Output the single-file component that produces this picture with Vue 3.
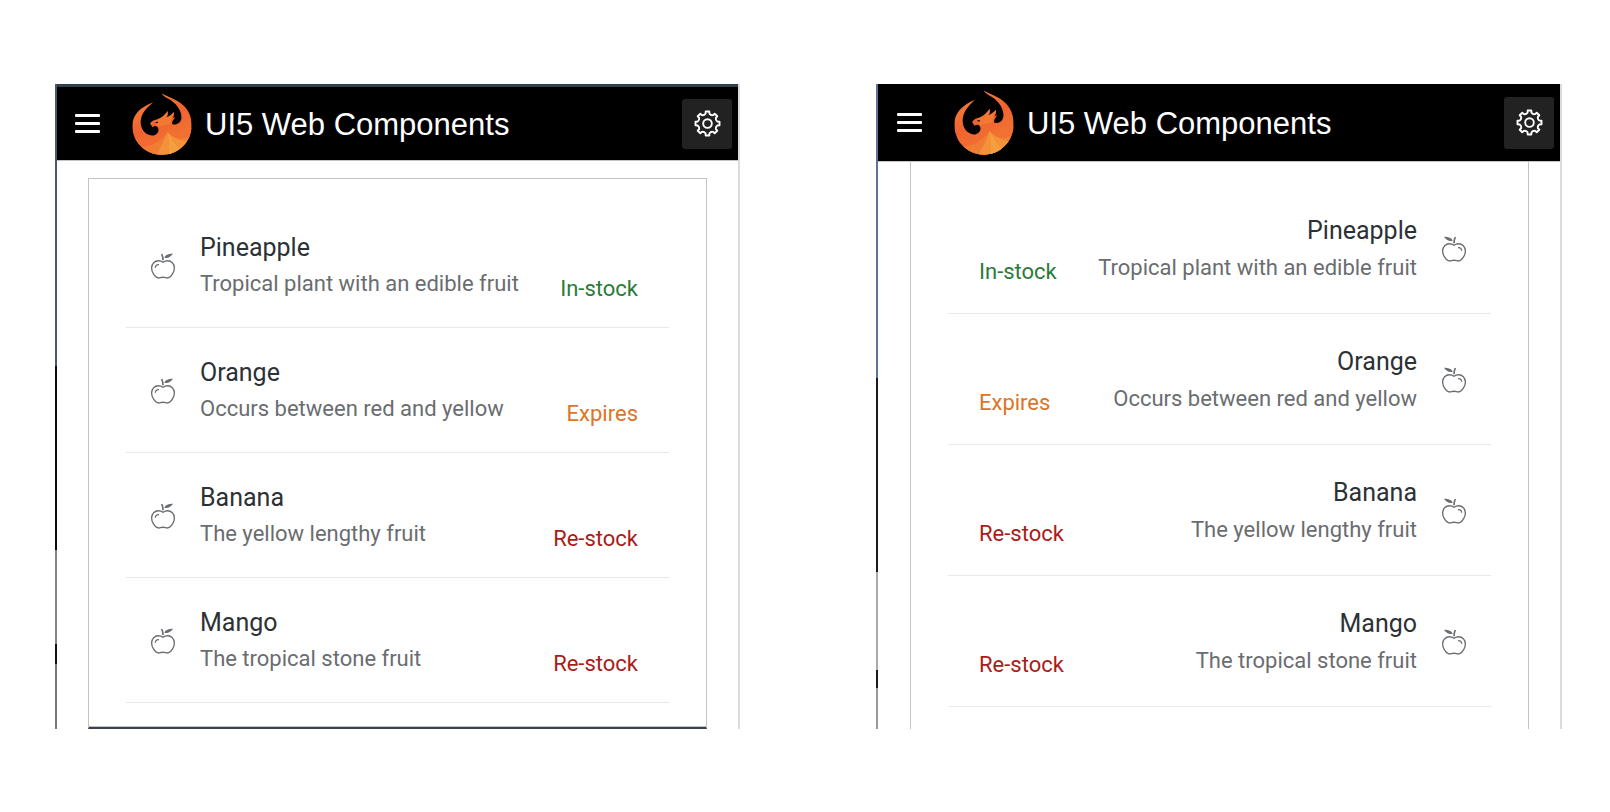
<script setup>
const fruits = [
  { name: 'Pineapple', text: 'Tropical plant with an edible fruit', status: 'In-stock', state: 'success' },
  { name: 'Orange', text: 'Occurs between red and yellow', status: 'Expires', state: 'warning' },
  { name: 'Banana', text: 'The yellow lengthy fruit', status: 'Re-stock', state: 'error' },
  { name: 'Mango', text: 'The tropical stone fruit', status: 'Re-stock', state: 'error' },
]
const panels = [
  { id: 'ltr', label: 'Left to right' },
  { id: 'rtl', label: 'Right to left' },
]

function gearPath() {
  const teeth = 8
  const step = (Math.PI * 2) / teeth
  const pt = (r, a) => `${(50 + r * Math.sin(a)).toFixed(2)} ${(50 - r * Math.cos(a)).toFixed(2)}`
  let d = ''
  for (let i = 0; i < teeth; i++) {
    const a = i * step
    d += `${i ? 'L' : 'M'}${pt(45, a - 0.15)}L${pt(45, a + 0.15)}L${pt(37, a + 0.2)}Q${pt(32, a + step / 2)} ${pt(37, a + step - 0.2)}`
  }
  return d + 'Z'
}
const gear = gearPath()
</script>

<template>
  <main class="page">
    <section v-for="p in panels" :key="p.id" class="panel" :class="p.id" :aria-label="p.label">
      <header class="bar">
        <button class="menu" type="button" aria-label="Menu"><i></i><i></i><i></i></button>
        <svg class="logo" viewBox="278 69 179 187" preserveAspectRatio="none" aria-hidden="true">
          <defs>
            <linearGradient :id="'fire-' + p.id" x1="0" y1="0" x2="0.5" y2="1">
              <stop offset="0" stop-color="#f58a3c" />
              <stop offset="0.55" stop-color="#f0622f" />
              <stop offset="1" stop-color="#f07a33" />
            </linearGradient>
            <clipPath :id="'bird-' + p.id">
              <path d="M367 70C382 84 456 92 456 166C456 215 417 255 367 255C318 255 279 216 279 169C279 133 304 112 341 97C315 119 303 136 304 162C307 185 323 198 341 197C353 195 360 184 356 175C353 168 345 167 339 172L332 161C337 153 344 151 352 149C364 145 376 136 384 123C386 131 385 137 380 142C389 139 397 133 403 126C405 133 403 139 399 144L407 142C402 149 396 155 398 163C407 166 421 162 425 148C429 127 413 104 396 92C383 84 371 80 367 70Z" />
            </clipPath>
          </defs>
          <g :clip-path="`url(#bird-${p.id})`">
            <rect x="278" y="69" width="179" height="187" :fill="`url(#fire-${p.id})`" />
            <path d="M279 200C305 221 350 215 384 188L380 256H279Z" fill="#f26a30" />
            <path d="M300 232C335 232 362 216 384 188L384 256H300Z" fill="#f17d34" />
            <path d="M384 187C405 204 433 204 457 172V256H384Z" fill="#f16f32" />
            <path d="M384 187C405 212 433 212 457 196V256H384Z" fill="#f28136" />
            <path d="M384 187C374 215 362 237 350 256H401C407 232 400 207 384 187Z" fill="#f3923b" />
            <path d="M384 187C390 210 390 235 388 256H404L425 240C404 222 394 203 384 187Z" fill="#f5a03f" />
            <path d="M384 187C394 203 405 216 425 240L444 216C418 214 400 203 384 187Z" fill="#f3943b" />
            <path d="M345 156L384 124L403 126L390 164L357 170Z" fill="#f58c36" opacity="0.5" />
          </g>
          <path d="M346 157L355 155L356 159L351 160Z" fill="#241008" />
        </svg>
        <h1 class="title">UI5 Web Components</h1>
        <button class="settings" type="button" aria-label="Settings">
          <svg viewBox="0 0 100 100" aria-hidden="true">
            <path :d="gear" />
            <circle cx="50" cy="50" r="16" />
          </svg>
        </button>
      </header>
      <div class="content">
        <ul class="list">
          <li v-for="f in fruits" :key="f.name" class="item">
            <svg class="apple" viewBox="0 0 72 76" aria-hidden="true">
              <path class="line" d="M36 27C28 21 16 20 8 28C0 36 0 50 7 61C13 71 20 76 28 73C34 71 38 71 44 73C52 76 59 71 65 61C72 50 72 36 64 28C56 20 44 21 36 27Z" />
              <path class="line" d="M13 43C13 37 18 33 24 34" />
              <path class="line stem" d="M32 2C35 8 36 14 36 21" />
              <path class="leaf" d="M40 13C43 4 53 1 66 1C60 10 51 16 40 13Z" />
            </svg>
            <div class="text">
              <h2 class="name">{{ f.name }}</h2>
              <p class="desc">{{ f.text }}</p>
            </div>
            <span class="status" :class="f.state">{{ f.status }}</span>
          </li>
        </ul>
      </div>
    </section>
  </main>
</template>

<style>
body {
  margin: 0;
  background: #fff;
}
</style>

<style scoped>
* {
  box-sizing: border-box;
}
.page {
  display: grid;
  grid-template-columns: 1fr 1fr;
  gap: 135px;
  padding: 84px 48px 82px 55px;
  font-family: Roboto, "Liberation Sans", sans-serif;
}
.panel {
  display: flex;
  flex-direction: column;
  padding-left: 2px;
  border-right: 2px solid #dcdcdc;
}
.ltr {
  margin-right: 1px;
  background: linear-gradient(#4a586d 0 282px, #0b0b0d 282px 466px, #858585 466px 560px, #111 560px 580px, #777 580px) left / 2px 100% no-repeat;
}
.rtl {
  background: linear-gradient(#5d7594 0 294px, #1b1b1d 294px 488px, #aaa 488px 586px, #1b1b1d 586px 604px, #999 604px) left / 2px 100% no-repeat;
}
.bar {
  display: flex;
  align-items: center;
  height: 77px;
  padding: 0 6px 0 18px;
  background: #000;
  border-bottom: 1px solid #c4c4c4;
}
.ltr .bar {
  border-top: 3px solid #333e4c;
}
.rtl .bar {
  height: 78px;
  padding-left: 19px;
}
.menu {
  display: flex;
  flex-direction: column;
  gap: 5px;
  width: 25px;
  padding: 0;
  border: 0;
  background: none;
}
.menu i {
  height: 3px;
  border-radius: 1px;
  background: #fff;
}
.logo {
  width: 60px;
  height: 62px;
  margin: 0 13px 0 32px;
}
.rtl .logo {
  height: 65px;
}
.title {
  flex: 1;
  margin: 0;
  padding-top: 2px;
  color: #fff;
  font: 400 31px/40px "Liberation Sans", Arial, sans-serif;
  white-space: nowrap;
}
.settings {
  display: flex;
  align-items: center;
  justify-content: center;
  width: 50px;
  height: 50px;
  padding: 0;
  border: 0;
  border-radius: 3px;
  background: #222;
}
.rtl .settings {
  height: 52px;
}
.settings svg {
  width: 27px;
  height: 27px;
  fill: none;
  stroke: #fff;
  stroke-width: 7;
  stroke-linejoin: round;
}
.content {
  flex: 1;
  padding: 24px 37px 22px;
  border: solid #c3c3c3;
  border-width: 0 1px;
}
.ltr .content {
  margin: 17px 31px 0;
  border-top-width: 1px;
  border-bottom: 2px solid #3a4250;
  box-shadow: inset 0 -1px #c3c3c3;
}
.rtl .content {
  margin: 0 31px 0 32px;
  padding-top: 21px;
}
.list {
  margin: 0;
  padding: 0;
  list-style: none;
}
.item {
  display: flex;
  align-items: center;
  height: 125px;
  padding: 0 31px 0 25px;
  border-bottom: 1px solid #e9e9e9;
}
.rtl .item {
  flex-direction: row-reverse;
  height: 131px;
  padding: 0 25px 0 31px;
}
.apple {
  width: 24px;
  height: 26px;
  margin-top: 2px;
  overflow: visible;
}
.rtl .apple {
  transform: scaleX(-1);
}
.line {
  fill: none;
  stroke: #6a6d70;
  stroke-width: 4;
}
.stem {
  stroke-width: 5;
}
.leaf {
  fill: #6a6d70;
}
.text {
  flex: 1;
  margin: 0 25px;
  padding-top: 2px;
}
.rtl .text {
  text-align: right;
}
.name,
.desc {
  margin: 0;
  font-weight: 400;
  line-height: 36px;
  white-space: nowrap;
}
.rtl .name,
.rtl .desc {
  line-height: 37px;
}
.name {
  color: #2c3136;
  font-size: 25px;
}
.desc {
  color: #6a6d70;
  font-size: 22px;
}
.status {
  padding-top: 47px;
  font-size: 22px;
  line-height: 24px;
}
.success {
  color: #2b7b38;
}
.warning {
  color: #dc7526;
}
.error {
  color: #a91c18;
}
</style>
